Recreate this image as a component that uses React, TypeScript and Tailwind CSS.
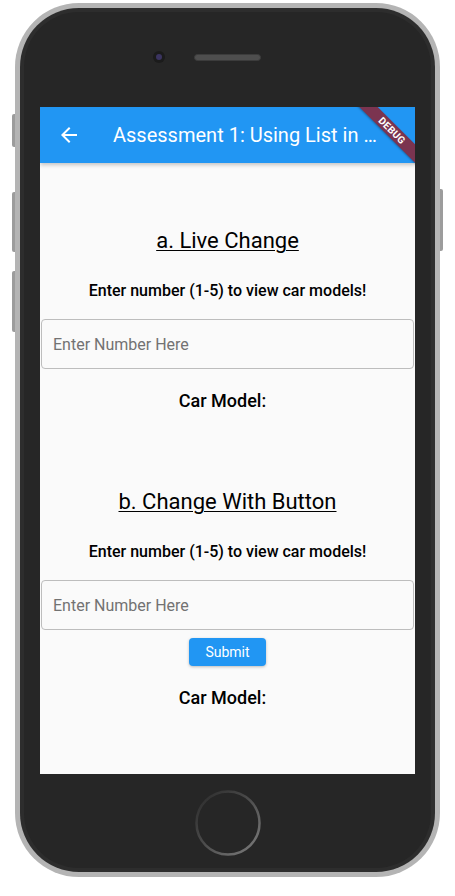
import React from 'react';

const ArrowBack = () => (
  <svg width="24" height="24" viewBox="0 0 24 24" fill="white">
    <path d="M20 11H7.83l5.59-5.59L12 4l-8 8 8 8 1.41-1.41L7.83 13H20v-2z" />
  </svg>
);

const HomeButton = () => (
  <svg width="66" height="66" viewBox="0 0 66 66">
    <defs>
      <linearGradient id="ring" x1="0" y1="0" x2="1" y2="1">
        <stop offset="0" stopColor="#2a2a2a" />
        <stop offset="0.45" stopColor="#4a4a4a" />
        <stop offset="1" stopColor="#7e7e7e" />
      </linearGradient>
    </defs>
    <circle cx="33" cy="33" r="31.5" fill="none" stroke="url(#ring)" strokeWidth="2.5" />
  </svg>
);

const Section = ({ title, withButton }: { title: string; withButton?: boolean }) => (
  <div className="flex flex-col items-center w-full">
    <h2 className="text-[22px] leading-[28px] text-black underline underline-offset-[2px] decoration-1">
      {title}
    </h2>
    <p className="mt-[26px] text-[16px] leading-[20px] font-medium text-black">
      Enter number (1-5) to view car models!
    </p>
    <div className="mt-[18px] w-full px-px">
      <input
        className="w-full h-[50px] rounded-[4px] border border-[#bdbdbd] bg-transparent px-[11px] text-[16px] text-black placeholder:text-[#727272] outline-none"
        placeholder="Enter Number Here"
      />
    </div>
    {withButton && (
      <button className="mt-[8px] h-[28px] w-[77px] rounded-[4px] bg-[#2196f3] text-white text-[14px] shadow-[0_1px_3px_rgba(0,0,0,0.25)]">
        Submit
      </button>
    )}
    <div className="mt-[20px] flex pr-[10px]">
      <p className="text-[18px] leading-[24px] font-medium text-black">Car Model:</p>
    </div>
  </div>
);

export default function App() {
  return (
    <div className="w-[455px] h-[896px] bg-white pl-[15px] pt-[3px]" style={{ fontFamily: 'Roboto, "Noto Sans", sans-serif' }}>
      <div className="relative w-[425px] h-[874px] rounded-[64px] bg-[#b4b4b4] p-[5px]">
        {/* side buttons */}
        <div className="absolute left-[-3px] top-[111px] w-[3px] h-[33px] rounded-l-[2px] bg-[#9c9c9c]" />
        <div className="absolute left-[-3px] top-[189px] w-[3px] h-[60px] rounded-l-[2px] bg-[#9c9c9c]" />
        <div className="absolute left-[-3px] top-[268px] w-[3px] h-[61px] rounded-l-[2px] bg-[#9c9c9c]" />
        <div className="absolute right-[-3px] top-[186px] w-[3px] h-[62px] rounded-r-[2px] bg-[#9c9c9c]" />

        <div className="h-full rounded-[59px] bg-[#2d2d2d] p-[4px]">
          <div className="h-full rounded-[55px] bg-[#262626] flex flex-col">
            {/* camera + speaker */}
            <div className="h-[95px] flex items-start pl-[129px] pt-[39px]">
              <div className="flex items-center gap-[29px]">
                <div className="w-[12px] h-[12px] rounded-full bg-[#1b1b1b] flex items-center justify-center">
                  <div className="w-[6px] h-[6px] rounded-full bg-[#3b3460]" />
                </div>
                <div className="w-[67px] h-[7px] rounded-full bg-[#4e4e4e] border border-[#3c3c3c]" />
              </div>
            </div>

            {/* screen */}
            <div className="relative mx-[16px] h-[667px] w-[375px] overflow-hidden bg-[#fafafa] flex flex-col">
              <div className="h-[56px] bg-[#2196f3] flex items-center shadow-[0_2px_4px_rgba(0,0,0,0.22)] z-10">
                <div className="w-[56px] flex justify-center pl-[1px]">
                  <ArrowBack />
                </div>
                <div className="pl-[17px] text-white text-[20px] whitespace-nowrap">
                  Assessment 1: Using List in …
                </div>
              </div>
              <div className="absolute left-[292px] top-[17px] w-[120px] h-[13px] rotate-45 bg-[#7b3450] flex items-center justify-center z-20 shadow-[0_1px_2px_rgba(0,0,0,0.3)]">
                <span className="text-white text-[10px] leading-none font-bold tracking-[0.3px]">DEBUG</span>
              </div>

              <div className="flex flex-col items-center pt-[64px]">
                <Section title="a. Live Change" />
                <div className="mt-[75px] w-full">
                  <Section title="b. Change With Button" withButton />
                </div>
              </div>
            </div>

            {/* home button */}
            <div className="flex-1 flex justify-center pt-[16px]">
              <HomeButton />
            </div>
          </div>
        </div>
      </div>
    </div>
  );
}
